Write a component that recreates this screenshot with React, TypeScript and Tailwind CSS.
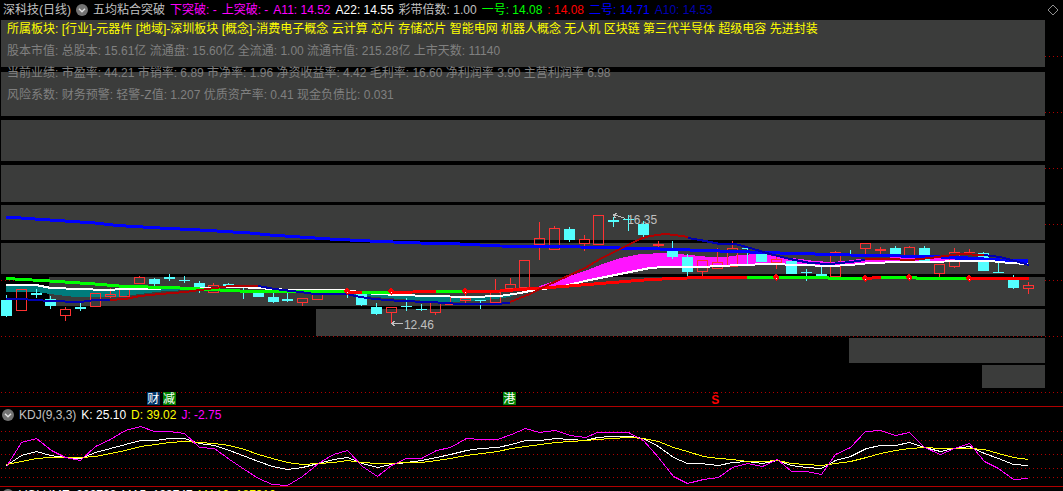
import React from "react";

type Point = [number, number];
type Candle = ["u" | "d", number, number, number, number];

const WIDTH = 1063;
const FIRST_X = 6;
const STEP = 14.81;

const barX = (i: number) => Math.round(FIRST_X + STEP * i);
const toPoints = (p: Point[]) => p.map(([x, y]) => `${x},${y}`).join(" ");

// [direction, body top, body bottom, high, low]
const candles: Candle[] = [
  ["d", 300, 316, 295, 317], ["u", 289, 311, 289, 311], ["d", 293, 295, 289, 298], ["d", 299, 306, 296, 309],
  ["u", 309, 316, 307, 321], ["d", 307, 309, 303, 311], ["u", 293, 307, 293, 307], ["u", 294, 297, 288, 298],
  ["u", 289, 297, 289, 297], ["u", 277, 284, 276, 284], ["d", 279, 284, 278, 286], ["d", 277, 279, 274, 281],
  ["d", 280, 281, 276, 283], ["d", 283, 288, 281, 293], ["u", 285, 293, 283, 293], ["d", 284, 286, 283, 286],
  ["d", 287, 288, 287, 299], ["d", 291, 297, 290, 297], ["d", 297, 302, 292, 303], ["d", 299, 301, 292, 302],
  ["u", 298, 303, 298, 306], ["u", 293, 300, 293, 300], ["u", 290, 292, 289, 292], ["d", 291, 292, 288, 298],
  ["d", 293, 305, 292, 306], ["d", 307, 314, 303, 315], ["u", 307, 313, 307, 323], ["d", 306, 307, 298, 311],
  ["d", 309, 310, 304, 311], ["u", 302, 313, 302, 315], ["u", 304, 305, 297, 305], ["u", 298, 301, 292, 304],
  ["d", 300, 301, 300, 309], ["u", 292, 303, 279, 303], ["u", 284, 289, 278, 289], ["u", 260, 288, 260, 288],
  ["u", 238, 245, 222, 260], ["u", 228, 250, 226, 250], ["d", 229, 240, 227, 242], ["u", 239, 244, 235, 251],
  ["u", 215, 245, 215, 245], ["d", 220, 222, 217, 227], ["d", 219, 220, 215, 231], ["d", 224, 235, 221, 237],
  ["u", 244, 246, 241, 247], ["d", 251, 257, 241, 259], ["d", 257, 272, 254, 276], ["u", 260, 272, 260, 276],
  ["u", 262, 269, 248, 269], ["u", 248, 267, 241, 267], ["d", 248, 249, 248, 264], ["d", 254, 262, 252, 262],
  ["u", 259, 263, 257, 269], ["d", 261, 274, 261, 274], ["d", 272, 273, 269, 281], ["d", 274, 277, 267, 277],
  ["u", 252, 277, 251, 277], ["d", 254, 255, 250, 255], ["u", 243, 249, 243, 254], ["u", 249, 251, 247, 254],
  ["d", 248, 254, 246, 255], ["u", 247, 257, 246, 257], ["d", 248, 263, 246, 263], ["u", 264, 274, 264, 277],
  ["u", 252, 267, 248, 268], ["u", 252, 253, 249, 253], ["d", 253, 271, 252, 271], ["d", 272, 273, 262, 273],
  ["d", 280, 288, 275, 289], ["u", 285, 289, 282, 294],
];

// [left, top, bottom]
const bands: [number, number, number][] = [
  [1, 20, 67], [1, 72, 116], [1, 120, 161], [1, 165, 202], [1, 205, 240],
  [1, 243, 274], [49, 277, 306], [316, 309, 336], [849, 338, 363], [982, 365, 388],
];

const longAverage: Point[] = [
  [6, 217], [50, 220], [95, 223], [117, 225.5], [160, 228], [200, 230], [250, 233], [270, 235], [330, 239],
  [380, 241.5], [420, 243], [460, 244], [500, 246], [560, 246.5], [600, 247.5], [660, 249], [720, 251],
  [780, 253], [850, 255], [900, 256], [960, 257.5], [1000, 260], [1028, 260.5],
];

const longAverageTail: Point[] = [[955, 259], [985, 260], [1010, 262], [1028, 262]];

const ribbon: { color: string; points: Point[] }[] = [
  { color: "#00ff00", points: [[6, 278.5], [50, 281], [95, 284], [125, 286.5], [170, 287.5], [210, 289.5], [250, 291.5], [347, 291.5]] },
  { color: "#ff0000", points: [[347, 292.5], [362, 292.5]] },
  { color: "#00ff00", points: [[362, 292.5], [391, 292.5]] },
  { color: "#ff0000", points: [[391, 292.5], [413, 292], [436, 291.5]] },
  { color: "#00ff00", points: [[436, 291.5], [464, 291.5]] },
  { color: "#ff0000", points: [[464, 291.5], [500, 291], [520, 289.5], [550, 287.5], [600, 283.5], [650, 279.5], [700, 277.5], [747, 277.5]] },
  { color: "#00ff00", points: [[747, 277.5], [828, 277.5], [829, 278.5], [864, 278.5]] },
  { color: "#ff0000", points: [[864, 278.5], [881, 277.5]] },
  { color: "#00ff00", points: [[881, 277.5], [916, 277.5], [917, 278.5], [968, 278.5]] },
  { color: "#ff0000", points: [[968, 278.5], [1029, 278.5]] },
];

const crossings: Point[] = [[347, 291], [391, 291], [465, 291], [776, 277], [865, 278], [909, 277], [969, 278]];

const whiteAverage: Point[] = [
  [6, 285], [36, 285], [51, 288], [80, 289], [105, 290], [125, 289], [200, 288], [240, 287], [290, 290],
  [345, 290], [375, 294], [400, 295], [430, 296], [470, 297], [500, 296], [520, 293], [535, 290], [560, 287],
  [585, 281], [600, 278], [625, 273], [650, 268], [665, 267], [700, 267], [720, 266], [740, 265], [770, 264],
  [800, 265], [830, 266], [850, 265], [870, 263], [900, 262], [990, 261], [1010, 263], [1028, 264],
];

const shortAverage: { color: string; points: Point[] }[] = [
  { color: "#0000b0", points: [[6, 299], [20, 299], [50, 301], [80, 302], [95, 300], [110, 300]] },
  { color: "#b00000", points: [[110, 300], [125, 299], [140, 296], [160, 294], [185, 292], [200, 290], [215, 288], [230, 286], [258, 286]] },
  { color: "#0000b0", points: [[258, 286], [275, 289], [300, 292], [315, 294], [347, 294], [360, 297], [375, 299], [400, 301], [430, 302], [460, 304], [495, 304], [510, 303]] },
  { color: "#b00000", points: [[510, 302], [530, 294], [550, 284], [570, 275], [585, 268], [600, 259], [620, 249], [640, 239], [650, 236], [665, 234], [675, 235], [688, 237]] },
  { color: "#0000b0", points: [[688, 238], [700, 240], [720, 244], [735, 244], [750, 248], [770, 254], [790, 259], [810, 263], [830, 264], [850, 262], [865, 260]] },
  { color: "#b00000", points: [[865, 259], [890, 259], [910, 260], [930, 258], [945, 256], [960, 254], [984, 255]] },
  { color: "#0000b0", points: [[984, 255], [1000, 257], [1015, 261], [1029, 265]] },
];

const tealAreas: Point[][] = [
  [[6, 285], [36, 285], [51, 288], [105, 290], [200, 288], [210, 290], [190, 290], [165, 291], [140, 294], [115, 297], [75, 297], [50, 294], [36, 292], [6, 292]],
  [[345, 291], [375, 294], [430, 296], [470, 297], [516, 294], [510, 297], [480, 301], [440, 302], [400, 299], [375, 297], [350, 294]],
];

const magentaArea: Point[] = [
  [528, 291], [540, 286], [560, 279], [585, 271], [600, 265], [620, 258], [640, 254], [665, 253], [690, 255],
  [710, 257], [725, 257], [740, 255], [757, 254], [775, 256], [800, 259], [815, 261], [830, 262], [845, 261],
  [860, 259], [900, 257], [960, 256], [1000, 260], [1000, 262], [900, 262], [870, 263], [830, 266], [770, 264],
  [720, 266], [665, 267], [650, 268], [600, 278], [560, 286],
];

const kLine: Point[] = [
  [6, 465], [21, 455], [36, 451], [50, 455], [65, 457], [80, 458], [95, 452], [110, 448], [140, 440], [155, 440],
  [169, 438], [184, 438], [199, 443], [214, 445], [229, 450], [258, 461], [272, 466], [287, 469], [302, 467],
  [318, 463], [333, 459], [347, 457], [362, 463], [377, 467], [391, 464], [406, 462], [421, 460], [436, 457],
  [450, 454], [466, 450], [480, 448], [497, 447], [511, 444], [525, 440], [540, 440], [555, 438], [570, 439],
  [585, 440], [597, 437], [610, 436], [630, 436], [643, 438], [658, 446], [673, 457], [687, 463], [700, 463],
  [718, 465], [732, 462], [747, 461], [762, 463], [777, 460], [791, 465], [806, 467], [821, 468], [835, 460],
  [850, 456], [866, 448], [880, 445], [895, 445], [909, 442], [924, 447], [940, 451], [954, 448], [969, 446],
  [984, 453], [998, 458], [1013, 464], [1028, 465],
];

const dLine: Point[] = [
  [6, 464], [21, 461], [36, 458], [50, 457], [80, 457], [95, 456], [110, 453], [125, 450], [140, 446], [155, 444],
  [169, 442], [184, 441], [199, 442], [214, 443], [229, 445], [244, 449], [258, 454], [272, 458], [287, 462],
  [302, 464], [318, 463], [333, 462], [347, 460], [362, 462], [377, 463], [391, 463], [406, 462], [421, 462],
  [436, 460], [450, 458], [466, 455], [497, 451], [511, 448], [525, 446], [540, 444], [555, 442], [570, 441],
  [585, 440], [597, 439], [610, 438], [630, 437], [643, 438], [658, 441], [673, 447], [687, 451], [703, 456],
  [718, 458], [732, 459], [747, 461], [762, 461], [777, 460], [791, 463], [806, 464], [821, 465], [835, 463],
  [850, 461], [866, 457], [880, 453], [895, 450], [909, 448], [924, 447], [940, 448], [969, 448], [984, 449],
  [998, 453], [1013, 457], [1028, 459],
];

const jLine: Point[] = [
  [6, 466], [21, 442], [36, 438], [51, 450], [65, 457], [80, 460], [95, 446], [110, 439], [125, 430], [140, 426],
  [154, 431], [169, 431], [184, 433], [199, 447], [214, 448], [229, 459], [244, 469], [258, 478], [272, 484],
  [287, 485], [302, 476], [318, 463], [333, 454], [347, 450], [362, 466], [377, 476], [391, 465], [406, 458],
  [421, 458], [436, 450], [450, 447], [466, 438], [480, 439], [497, 439], [511, 434], [525, 428], [539, 432],
  [555, 430], [570, 435], [585, 437], [597, 432], [628, 432], [643, 440], [658, 457], [673, 476], [687, 483],
  [703, 479], [718, 477], [732, 467], [747, 463], [762, 466], [777, 459], [791, 471], [806, 471], [821, 474],
  [835, 454], [850, 447], [865, 431], [880, 430], [895, 435], [909, 432], [924, 447], [940, 454], [954, 448],
  [969, 443], [984, 461], [998, 468], [1013, 479], [1028, 478],
];

const quotes = [
  { text: "下突破: -", tone: "text-[#ff00ff]" },
  { text: "上突破: -", tone: "text-[#ff00ff]" },
  { text: "A11: 14.52", tone: "text-[#ff00ff]" },
  { text: "A22: 14.55", tone: "text-white" },
  { text: "彩带倍数: 1.00", tone: "text-[#c0c0c0]" },
  { text: "一号: 14.08", tone: "text-[#00ff00]" },
  { text: ": 14.08", tone: "text-[#ff0000]" },
  { text: "二号: 14.71", tone: "text-[#0000ff]" },
  { text: "A10: 14.53", tone: "text-[#0000b0]" },
];

const facts = [
  "股本市值: 总股本: 15.61亿 流通盘: 15.60亿 全流通: 1.00 流通市值: 215.28亿 上市天数: 11140",
  "当前业绩: 市盈率: 44.21 市销率: 6.89 市净率: 1.96 净资收益率: 4.42 毛利率: 16.60 净利润率 3.90 主营利润率 6.98",
  "风险系数: 财务预警: 轻警-Z值: 1.207 优质资产率: 0.41 现金负债比: 0.031",
];

function MenuButton({ label }: { label: string }) {
  return (
    <button type="button" aria-label={label} className="h-3 w-3 shrink-0">
      <svg viewBox="0 0 12 12" className="block h-3 w-3">
        <circle cx="6" cy="6" r="6" fill="#737373" />
        <path d="M3 4.8 L6 7.8 L9 4.8" fill="none" stroke="#e0e0e0" strokeWidth="1.5" />
      </svg>
    </button>
  );
}

function DottedRow({ y }: { y: number }) {
  return <line x1="1" x2={WIDTH} y1={y + 0.5} y2={y + 0.5} stroke="#b00000" strokeDasharray="1 3" />;
}

function CandleShape({ index, candle }: { index: number; candle: Candle }) {
  const [kind, top, bottom, high, low] = candle;
  const x = barX(index);
  if (kind === "d") {
    return (
      <g fill="#54ffff">
        <rect x={x - 5} y={top} width="11" height={bottom - top} />
        <rect x={x} y={high} width="1" height={low - high} />
      </g>
    );
  }
  return (
    <g>
      <g fill="#ff3232">
        <rect x={x} y={high} width="1" height={top - high} />
        <rect x={x} y={bottom} width="1" height={low - bottom} />
      </g>
      {bottom - top > 2 ? (
        <rect x={x - 4.5} y={top + 0.5} width="10" height={bottom - top - 1} fill="none" stroke="#ff3232" />
      ) : (
        <rect x={x - 5} y={top} width="11" height={bottom - top} fill="#ff3232" />
      )}
    </g>
  );
}

function PriceDrawing() {
  return (
    <svg
      viewBox="0 20 1063 386"
      preserveAspectRatio="none"
      shapeRendering="crispEdges"
      className="absolute inset-0 h-full w-full"
      aria-hidden="true"
    >
      {[56, 112, 168, 224, 280, 392].map((y) => <DottedRow key={y} y={y} />)}
      {bands.map(([left, top, bottom]) => (
        <rect key={top} x={left} y={top} width={1045 - left} height={bottom - top} fill="#3b3c3b" />
      ))}
      <DottedRow y={336} />
      {tealAreas.map((a, i) => <polygon key={i} points={toPoints(a)} fill="#007c7c" />)}
      <polygon points={toPoints(magentaArea)} fill="#ff14ff" />
      {candles.map((c, i) => <CandleShape key={i} index={i} candle={c} />)}
      <g fill="none" strokeLinejoin="round">
        <polyline points={toPoints(longAverage)} stroke="#0000ff" strokeWidth="3" />
        <polyline points={toPoints(longAverageTail)} stroke="#0000ff" strokeWidth="3" />
        <polyline points={toPoints(whiteAverage)} stroke="#ffffff" strokeWidth="2" />
        {ribbon.map((s, i) => <polyline key={i} points={toPoints(s.points)} stroke={s.color} strokeWidth="3" />)}
        {shortAverage.map((s, i) => <polyline key={i} points={toPoints(s.points)} stroke={s.color} strokeWidth="2" />)}
      </g>
      {crossings.map(([x, y]) => (
        <g key={x}>
          <path d={`M${x} ${y - 3} l3 2 v2 l-3 3 l-3 -3 v-2z`} fill="#ff0000" />
          <rect x={x} y={y + 1} width="1" height="1" fill="#ffffff" />
        </g>
      ))}
      <g fill="none" stroke="#c0c0c0">
        <path d="M391.5 323.5 H402.5 M395.5 320.5 L391.5 323.5 L395.5 326.5" />
        <path d="M613.5 214.5 L625.5 218.5 M617.5 213.5 L613.5 214.5 L615.5 218.5" />
      </g>
    </svg>
  );
}

export default function App() {
  return (
    <main className="flex h-screen flex-col overflow-hidden bg-black font-['Liberation_Sans','Noto_Sans_CJK_SC',sans-serif] text-xs leading-5 whitespace-nowrap text-[#c0c0c0]">
      <header className="flex h-[19px] shrink-0 items-center gap-[5px] pl-[3px]">
        <h1>深科技(日线)</h1>
        <MenuButton label="指标菜单" />
        <span>五均粘合突破</span>
        {quotes.map((q) => <span key={q.text} className={q.tone}>{q.text}</span>)}
        <button type="button" aria-label="标记" className="mr-1 ml-auto h-3 w-3">
          <svg viewBox="0 0 12 12" className="block h-3 w-3">
            <path d="M6 1 L11 6 L6 11 L1 6Z" fill="none" stroke="#909090" />
          </svg>
        </button>
      </header>

      <section className="relative mt-px h-[386px] shrink-0">
        <PriceDrawing />
        <div className="relative -top-px flex flex-col gap-0.5 pl-[7px] text-[#808080]">
          <p className="text-[#ffff00]">
            所属板块: [行业]-元器件 [地域]-深圳板块 [概念]-消费电子概念 云计算 芯片 存储芯片 智能电网 机器人概念 无人机 区块链 第三代半导体 超级电容 先进封装
          </p>
          {facts.map((f) => <p key={f}>{f}</p>)}
        </div>
        <span className="absolute top-[190px] left-[59%]">16.35</span>
        <span className="absolute top-[295px] left-[38%]">12.46</span>
        <span className="absolute top-[372px] left-[13.8%] h-[13px] w-[13px] bg-[#003468] text-center leading-[14px] text-white">财</span>
        <span className="absolute top-[372px] left-[15.3%] h-[13px] w-[13px] bg-[#008000] text-center leading-[14px] text-white">减</span>
        <span className="absolute top-[372px] left-[47.3%] h-[13px] w-[13px] bg-[#008000] text-center leading-[14px] text-white">港</span>
        <span className="absolute top-[372px] left-[66.9%] leading-4 font-bold text-[#ff0000]">Ŝ</span>
      </section>

      <section className="relative h-20 shrink-0 border-t border-[#b00000]">
        <svg
          viewBox="0 407 1063 79"
          preserveAspectRatio="none"
          shapeRendering="crispEdges"
          className="absolute inset-0 h-full w-full"
          aria-hidden="true"
        >
          {[431, 440, 454, 468, 477].map((y) => <DottedRow key={y} y={y} />)}
          <g fill="none" transform="translate(0.5 0.5)">
            <polyline points={toPoints(kLine)} stroke="#ffffff" />
            <polyline points={toPoints(dLine)} stroke="#ffff00" />
            <polyline points={toPoints(jLine)} stroke="#ff00ff" />
          </g>
        </svg>
        <div className="relative flex h-4 items-center gap-[5px] pl-0.5">
          <MenuButton label="KDJ 菜单" />
          <span>KDJ(9,3,3)</span>
          <span className="text-white">K: 25.10</span>
          <span className="text-[#ffff00]">D: 39.02</span>
          <span className="text-[#ff00ff]">J: -2.75</span>
        </div>
      </section>

      <section className="shrink-0 border-t border-[#b00000]">
        <div className="flex h-4 items-center gap-[5px] pl-0.5">
          <MenuButton label="成交量菜单" />
          <span className="text-white">VOLUME: 202729</span>
          <span className="text-white">MA5: 193747</span>
          <span className="text-[#ffff00]">MA10: 187910</span>
        </div>
      </section>
    </main>
  );
}
